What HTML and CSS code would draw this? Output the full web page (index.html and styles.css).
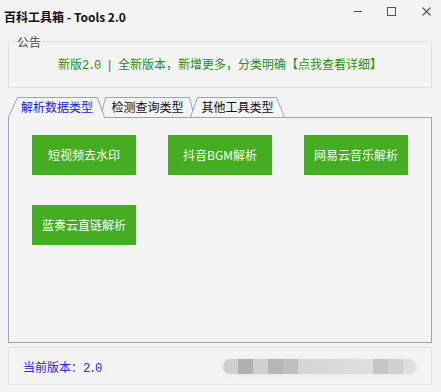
FILE: index.html
```html
<!DOCTYPE html>
<html lang="zh-CN">
<head>
<meta charset="utf-8">
<title>百科工具箱 - Tools 2.0</title>
<link rel="stylesheet" href="styles.css">
</head>
<body>
<div class="window">
  <header class="titlebar">
    <div class="title">百科工具箱 - Tools 2.0</div>
    <div class="controls">
      <svg class="ctl" width="8" height="8" viewBox="0 0 8 8"><path d="M0 4.5H8" stroke="#555" stroke-width="1"/></svg>
      <svg class="ctl" width="9" height="9" viewBox="0 0 9 9"><rect x="0.5" y="0.5" width="8" height="8" fill="none" stroke="#555" stroke-width="1"/></svg>
      <svg class="ctl close" width="9" height="9" viewBox="0 0 9 9"><path d="M0.5 0.5L8.5 8.5M8.5 0.5L0.5 8.5" stroke="#555" stroke-width="1.1"/></svg>
    </div>
  </header>

  <section class="notice">
    <span class="legend">公告</span>
    <div class="notice-text">新版<span class="mono">2.0 | </span>全新版本，新增更多，分类明确【点我查看详细】</div>
  </section>

  <nav class="tabs">
    <div class="tab tab-active">
      <svg class="tab-shape" width="97" height="21" viewBox="0 0 97 21"><polygon points="1,21 9.5,1 89.5,1 96,21" fill="#f4f4f4"/><path d="M0.5 21L0.5 20L9.5 0.5L89.5 0.5L96.5 20.5" fill="none" stroke="#96a6b6"/></svg>
      <span class="tab-label">解析数据类型</span>
    </div>
    <div class="tab tab-2">
      <svg class="tab-shape" width="95" height="21" viewBox="0 0 95 21"><polygon points="0.5,20 5.5,0.5 89.5,0.5 94.5,20" fill="#f4f4f4"/><path d="M0.5 20L5.5 0.5L89.5 0.5L94.5 20" fill="none" stroke="#96a6b6"/></svg>
      <span class="tab-label">检测查询类型</span>
    </div>
    <div class="tab tab-3">
      <svg class="tab-shape" width="95" height="21" viewBox="0 0 95 21"><polygon points="0.5,20 7.5,0.5 86.5,0.5 94.5,20" fill="#f4f4f4"/><path d="M0.5 20L7.5 0.5L86.5 0.5L94.5 20" fill="none" stroke="#96a6b6"/></svg>
      <span class="tab-label">其他工具类型</span>
    </div>
  </nav>

  <main class="panel">
    <div class="grid">
      <button class="btn">短视频去水印</button>
      <button class="btn">抖音BGM解析</button>
      <button class="btn">网易云音乐解析</button>
      <button class="btn">蓝奏云直链解析</button>
    </div>
  </main>

  <footer class="status">
    <span class="version">当前版本：<span class="mono">2.0</span></span>
    <div class="blur">
      <span style="background:#cfcfcf"></span>
      <span style="background:#b0b0b0"></span>
      <span style="background:#d0d0d0"></span>
      <span style="background:#b6b6b6"></span>
      <span style="background:#bebebe"></span>
      <span style="background:#d5d5d5"></span>
      <span style="background:#d7d7d7"></span>
      <span style="background:#dadada"></span>
      <span style="background:#dcdcdc"></span>
      <span style="background:#dedede"></span>
      <span style="background:#c5c5c5"></span>
      <span style="background:#d0d0d0"></span>
      <span style="background:#dedede"></span>
    </div>
  </footer>
</div>
</body>
</html>
```

FILE: styles.css
```css
* { box-sizing: border-box; }
html, body {
  margin: 0;
  padding: 0;
  background: #f4f4f4;
}
body {
  font-family: "Noto Sans CJK SC", "Liberation Sans", sans-serif;
  font-size: 12px;
  color: #222;
}
.window {
  width: 441px;
  height: 392px;
  display: flex;
  flex-direction: column;
  overflow: hidden;
}
.titlebar {
  height: 30px;
  display: flex;
  align-items: flex-start;
}
.title {
  padding: 10px 0 0 4px;
  font-size: 12px;
  line-height: 14px;
  font-weight: 700;
  color: #111;
}
.controls {
  margin-left: auto;
  padding: 7px 10px 0 0;
  display: flex;
  align-items: flex-start;
  gap: 25px;
}
.ctl { display: block; }
.close { margin-left: 1px; }

.notice {
  margin: 11px 9px 0 8px;
  height: 47px;
  border: 1px solid #dedede;
}
.legend {
  display: block;
  width: fit-content;
  margin: -6px 0 0 7px;
  padding: 0 1px;
  font-size: 12px;
  line-height: 12px;
  color: #444;
  background: #f4f4f4;
}
.notice-text {
  margin-top: 8px;
  text-align: center;
  line-height: 16px;
  color: #2a8c0c;
}
.mono {
  font-family: "Liberation Mono", monospace;
  letter-spacing: -1.2px;
}

.tabs {
  margin: 9px 0 0 8px;
  height: 20px;
  display: flex;
  position: relative;
  z-index: 1;
}
.tab {
  position: relative;
  height: 20px;
  display: flex;
  align-items: center;
  justify-content: center;
}
.tab-shape {
  position: absolute;
  left: 0;
  top: 0;
  overflow: visible;
}
.tab-label {
  position: relative;
  font-size: 12px;
  line-height: 14px;
  color: #111;
}
.tab-active { width: 97px; z-index: 3; }
.tab-active .tab-label { color: #1414f0; margin-left: 1px; }
.tab-2 { width: 95px; margin-left: -5px; z-index: 1; }
.tab-3 { width: 95px; margin-left: -5px; z-index: 2; }

.panel {
  margin: 0 9px 0 8px;
  height: 226px;
  border: 1px solid #96a6b6;
  padding: 17px 0 0 23px;
}
.grid {
  display: grid;
  grid-template-columns: repeat(3, 104px);
  grid-auto-rows: 40px;
  column-gap: 32px;
  row-gap: 30px;
}
.btn {
  border: 0;
  margin: 0;
  padding: 0;
  background: #45ad21;
  color: #f4fff0;
  font-family: "Noto Sans CJK SC", sans-serif;
  font-size: 12px;
  line-height: 14px;
  cursor: pointer;
}

.status {
  margin: 4px 9px 0 8px;
  height: 38px;
  border: 1px solid #e2e2e2;
  display: flex;
  align-items: center;
  padding: 0 15px 0 14px;
}
.version {
  color: #2222f0;
  line-height: 14px;
  margin-top: 3px;
}
.blur {
  margin-left: auto;
  width: 193px;
  height: 15px;
  display: flex;
  border-radius: 7px;
  overflow: hidden;
  box-shadow: 0 1px 4px 2px #ececec;
}
.blur span {
  flex: 0 0 15px;
  height: 100%;
}
.blur span:last-child { flex: 1 1 auto; }
```
